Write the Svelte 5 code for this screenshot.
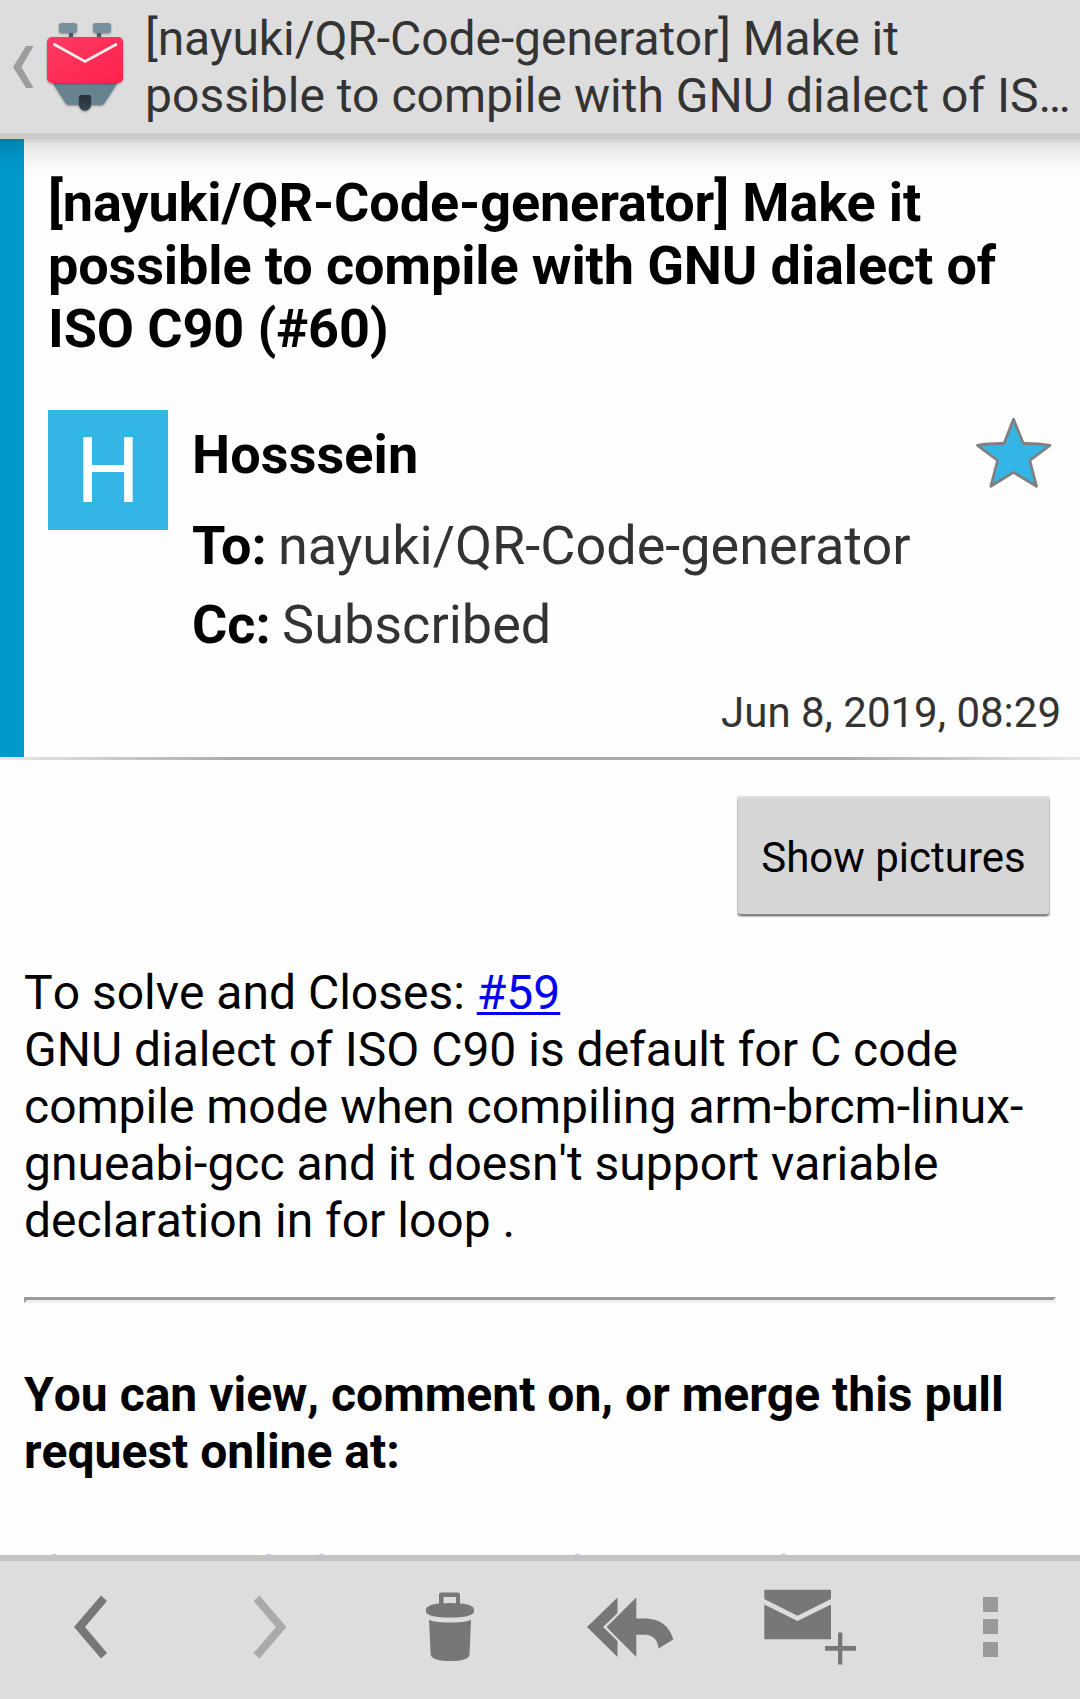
<script>
  const link = 'https://github.com/nayuki/QR-Code-generator/pull/60';
</script>

<div class="screen">
  <header class="topbar">
    <svg class="home" width="136" height="133" viewBox="0 0 136 133">
      <defs>
        <linearGradient id="env" x1="0" y1="0" x2="1" y2="1">
          <stop offset="0" stop-color="#ff3b64" />
          <stop offset="1" stop-color="#ff214c" />
        </linearGradient>
        <linearGradient id="nose" x1="0" y1="0" x2="0" y2="1">
          <stop offset="0" stop-color="#263238" />
          <stop offset="1" stop-color="#37474f" />
        </linearGradient>
        <filter id="soft" x="-10%" y="-10%" width="120%" height="125%">
          <feDropShadow dx="0" dy="1" stdDeviation="0.8" flood-opacity="0.35" />
        </filter>
      </defs>
      <path d="M26 46h7.5l-12 21 12 21H26L13 67z" fill="#9d9d9d" />
      <g filter="url(#soft)">
        <path d="M69 32h4v6h-4zM97 32h4v6h-4z" fill="#455a64" />
        <rect x="59" y="23" width="18" height="10" rx="2.5" fill="#78909c" />
        <rect x="93" y="23" width="18" height="10" rx="2.5" fill="#78909c" />
        <path d="M52 82h66l-13 20.5q-1.5 2.500-4 2.500H69q-2.500 0-4-2.500z" fill="#678390" />
      </g>
      <g filter="url(#soft)">
        <rect x="47" y="37" width="76" height="46" rx="5" fill="url(#env)" />
        <path d="M79 97q0-2 2-2h8q2 0 2 2v8q0 2-1.500 3.500L88 110q-3 1.500-6 0l-1.500-1.500Q79 107 79 105z" fill="url(#nose)" />
      </g>
      <path d="M54.500 44.500L85 61.500l31-17" fill="none" stroke="#ffecec" stroke-width="2.700" stroke-linecap="round" />
    </svg>
    <div class="bartitle"><span class="first">[nayuki/QR-Code-generator] Make it</span><br /><span class="second">possible to compile with GNU dialect of IS…</span></div>
  </header>

  <section class="message-head">
    <div class="chip"></div>
    <div class="info">
      <h1>[nayuki/QR-Code-generator] Make it<br />possible to compile with GNU dialect of<br />ISO C90 (#60)</h1>
      <div class="people">
        <div class="avatar">H</div>
        <div class="names">
          <div class="from">Hosssein</div>
          <div class="to"><b>To:</b> <span>nayuki/QR-Code-generator</span></div>
          <div class="cc"><b>Cc:</b> <span>Subscribed</span></div>
        </div>
        <svg class="star" width="80" height="76" viewBox="974 415 80 76">
          <path d="M1013.500 419.300L1023.300 443.500Q1038 443.300 1050 445.300L1029.800 460.500L1036.500 486.300L1013.500 472.300L990.800 486.300L997.600 460.500L977.500 445.300Q989 443.300 1004 443.500Z" fill="#33b5e5" stroke="#808080" stroke-width="2.800" stroke-linejoin="round" />
        </svg>
      </div>
      <time>Jun 8, 2019, 08:29</time>
    </div>
  </section>
  <div class="divider"></div>

  <main>
    <button>Show pictures</button>
    <p class="text">To solve and Closes: <a href="#59">#59</a><br />GNU dialect of ISO C90 is default for C code<br />compile mode when compiling arm-brcm-linux-<br />gnueabi-gcc and it doesn't support variable<br />declaration in for loop .</p>
    <hr />
    <p class="view">You can view, comment on, or merge this pull<br />request online at:</p>
    <p class="url"><span>{link}</span></p>
  </main>

  <nav>
    <svg viewBox="0 1561 180 138"><path d="M74 1627L101 1595.500L107 1601L85 1627L107 1653L101 1658.500Z" /></svg>
    <svg class="off" viewBox="180 1561 180 138"><path d="M253.500 1601L259.500 1595.500L286.500 1627L259.500 1658.500L253.500 1653L276 1627Z" /></svg>
    <svg viewBox="360 1561 180 138">
      <path fill-rule="evenodd" d="M439 1605V1594.500Q439 1592.500 441 1592.500H458Q460 1592.500 460 1594.500V1605ZM443.500 1597V1604H456V1597Z" />
      <path d="M426 1609Q428 1603 450 1603Q472 1603 474 1609V1612Q472 1617.500 450 1617.500Q428 1617.500 426 1612Z" />
      <path d="M429 1619.500Q432 1622.500 450 1622.500Q468 1622.500 471 1619.500L469.500 1655Q468 1661 450 1661Q433 1661 430.700 1655Z" />
    </svg>
    <svg viewBox="540 1561 180 138">
      <path d="M587 1627L617.500 1597.500V1613L603 1627L617.500 1641V1657Z" />
      <path d="M606.500 1627L636.300 1597.500V1618.500H646C660 1618.500 670 1627 673.300 1639.500L658.500 1648.500C658 1640 653 1634.700 645 1634.700H636.300V1657Z" />
    </svg>
    <svg viewBox="720 1561 180 138">
      <path d="M764.300 1589.800H831V1599L797.500 1615.800L764.300 1599Z" />
      <path d="M764.300 1604.500L797.500 1621L831 1604.500V1639.300H764.300Z" />
      <path d="M838 1632.500H842.300V1646H856V1650.700H842.300V1664.500H838V1650.700H825V1646H838Z" />
    </svg>
    <svg class="more" viewBox="900 1561 180 138"><path d="M983 1597h15v15h-15zM983 1619h15v15h-15zM983 1642h15v15h-15z" /></svg>
  </nav>
</div>

<style>
  :global(body) {
    margin: 0;
    background: #fefefe;
  }
  .screen {
    width: 1080px;
    height: 1699px;
    display: flex;
    flex-direction: column;
    overflow: hidden;
    background: #fefefe;
    font-family: Roboto, sans-serif;
    color: #000;
  }
  .topbar {
    position: relative;
    box-sizing: border-box;
    flex: none;
    display: flex;
    height: 139px;
    background: #ddd;
    border-bottom: 6px solid #cbcbcb;
  }
  /* Shadow cast by the action bar on the content beneath it */
  .topbar::after {
    content: '';
    position: absolute;
    left: 0;
    right: 0;
    top: 139px;
    height: 40px;
    background: linear-gradient(rgba(0, 0, 0, 0.17) 0 3px, rgba(0, 0, 0, 0.125) 3px, rgba(0, 0, 0, 0.06) 14px, rgba(0, 0, 0, 0.02) 28px, transparent);
  }
  .home {
    flex: none;
  }
  .bartitle {
    padding: 10px 0 0 9px;
    font-size: 48px;
    line-height: 57px;
    color: #333;
    white-space: nowrap;
  }
  .first {
    letter-spacing: -0.07px;
  }
  .second {
    letter-spacing: 0.03px;
  }
  .message-head {
    flex: none;
    display: flex;
    height: 618px;
  }
  .chip {
    width: 24px;
    background: #0099cc;
  }
  .info {
    flex: 1;
    padding: 32px 19px 0 24px;
  }
  h1 {
    margin: 0;
    font-size: 54px;
    line-height: 63px;
    letter-spacing: -0.12px;
    white-space: nowrap;
  }
  .people {
    display: flex;
    margin-top: 50px;
    height: 278px;
  }
  .avatar {
    flex: none;
    width: 120px;
    height: 120px;
    background: #33b5e5;
    color: #fff;
    font-size: 90px;
    line-height: 124px;
    text-align: center;
  }
  .names {
    flex: 1;
    padding: 13px 0 0 24px;
    font-size: 54px;
    line-height: 63px;
    white-space: nowrap;
  }
  .from {
    font-weight: 700;
    letter-spacing: 0.1px;
  }
  .to {
    margin-top: 28px;
    word-spacing: -2px;
  }
  .cc {
    margin-top: 16px;
    word-spacing: -2px;
  }
  .names span {
    color: #333;
  }
  .star {
    flex: none;
    margin: 5px 7px 0 0;
  }
  time {
    display: block;
    font-size: 42px;
    line-height: 49px;
    text-align: right;
    color: #333;
  }
  .divider {
    flex: none;
    height: 3px;
    background: linear-gradient(90deg, #e8e8e8, #aaa 22%, #aaa 78%, #e8e8e8);
  }
  main {
    flex: 1;
    min-height: 0;
    overflow: hidden;
    display: flex;
    flex-direction: column;
    padding: 36px 24px 0;
    font-size: 48px;
    line-height: 57px;
    font-kerning: none;
    white-space: nowrap;
  }
  button {
    align-self: flex-end;
    flex: none;
    width: 313px;
    height: 120px;
    margin-right: 6px;
    padding: 2px 0 0;
    border: 0;
    border-radius: 4px;
    background: #d6d6d6;
    box-shadow: inset 0 2px 0 #e0e0e0, inset 1px 0 0 #c4c4c4, inset -1px 0 0 #c4c4c4, inset 0 -2px 0 #858585, 0 1px 1px #bbb;
    font: 42px/49px Roboto, sans-serif;
    color: #000;
  }
  p {
    margin: 0;
    flex: none;
  }
  .text {
    margin-top: 48px;
  }
  a {
    color: #0000ee;
    text-decoration: underline;
    text-decoration-thickness: 3px;
    text-underline-offset: 3px;
    text-decoration-skip-ink: none;
  }
  hr {
    flex: none;
    align-self: stretch;
    box-sizing: border-box;
    height: 6px;
    margin: 48px 0 0;
    border: 3px solid;
    border-color: #9a9a9a #eee #eee #9a9a9a;
  }
  .view {
    margin-top: 63px;
    font-weight: 700;
  }
  .url {
    margin-top: 65px;
    padding-left: 24px;
    white-space: normal;
    color: #c4c4fc;
  }
  nav {
    flex: none;
    display: flex;
    height: 138px;
    border-top: 6px solid #c4c4c4;
    background: #ddd;
  }
  nav svg {
    width: 180px;
    height: 138px;
    fill: #777;
  }
  nav .off {
    fill: #aaa;
  }
  nav .more {
    fill: #999;
  }
</style>
